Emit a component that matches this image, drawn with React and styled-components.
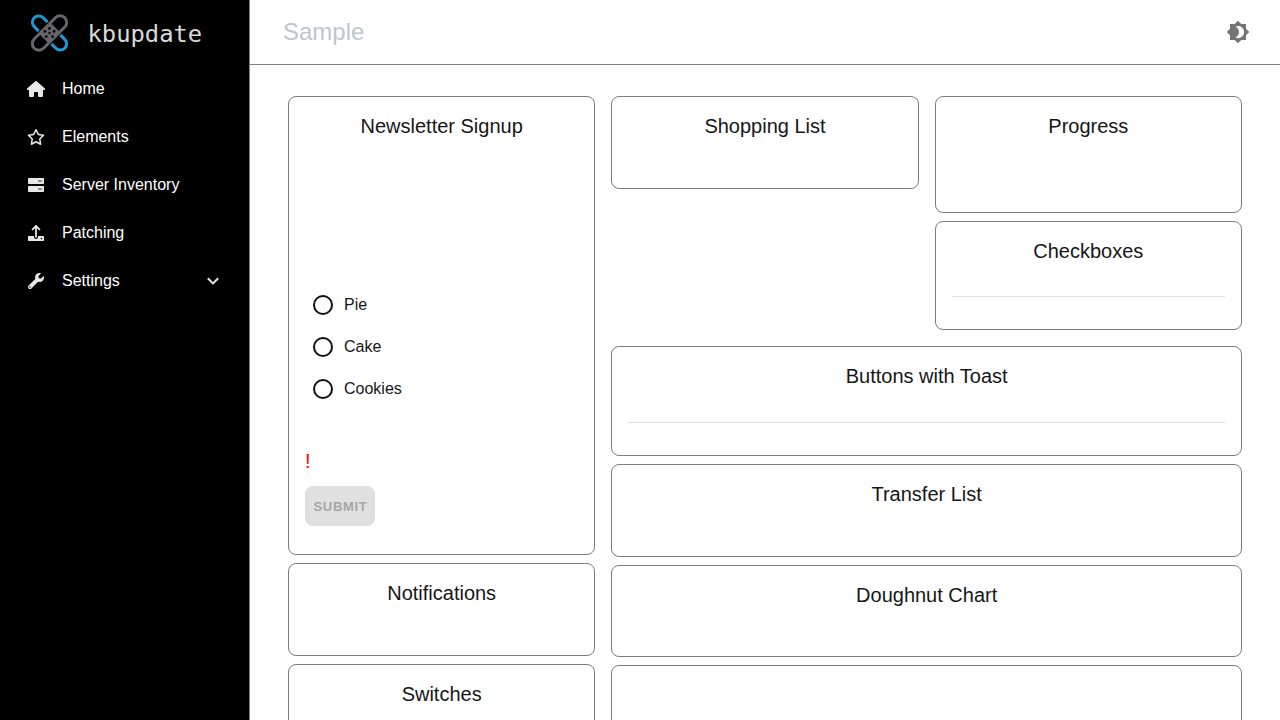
import React from "react";
import styled, { createGlobalStyle } from "styled-components";
import { FaHouse, FaRegStar } from "react-icons/fa6";
import { FaWrench } from "react-icons/fa";

const GlobalStyle = createGlobalStyle`
  *, *::before, *::after { box-sizing: border-box; }
  html, body { margin: 0; height: 100%; overflow: hidden; }
  body {
    font-family: "Liberation Sans", Arial, sans-serif;
    font-size: 16px;
    background: #fff;
    color: #161616;
  }
`;

const Shell = styled.div`
  display: flex;
  width: 100%;
  height: 100vh;
  overflow: hidden;
`;

const Sidebar = styled.nav`
  flex: 0 0 250px;
  background: #000;
  border-right: 1px solid #808080;
  color: #e7e7e7;
`;

const Brand = styled.div`
  display: flex;
  align-items: center;
  height: 64px;
  padding: 2px 0 0 30px;
`;

const BrandName = styled.span`
  margin-left: 18.5px;
  padding-top: 2px;
  font: 23.8px/28px "DejaVu Sans Mono", monospace;
  color: #d9d9d9;
`;

const NavItem = styled.a`
  display: flex;
  align-items: center;
  height: 48px;
  padding: 1px 30px 0 27px;
`;

const NavIcon = styled.span`
  display: flex;
  justify-content: center;
  width: 18px;
  margin-right: 17px;
`;

const NavLabel = styled.span`
  flex: 1;
  padding-top: 1px;
  color: #fff;
`;

const Main = styled.main`
  flex: 1;
  min-width: 0;
  display: flex;
  flex-direction: column;
`;

const Header = styled.header`
  flex: 0 0 65px;
  display: flex;
  align-items: center;
  justify-content: space-between;
  padding: 0 30px 0 33px;
  border-bottom: 1px solid #808080;
  color: #757575;
`;

const PageTitle = styled.h1`
  margin: 0;
  font-size: 24px;
  font-weight: 400;
  line-height: 32px;
  color: #bbc8ca;
`;

const Board = styled.div`
  display: grid;
  grid-template-columns: repeat(3, 1fr);
  column-gap: 16px;
  align-items: start;
  padding: 31px 38px 0;
`;

const Stack = styled.div`
  display: flex;
  flex-direction: column;
  gap: 8px;
`;

const WideArea = styled.div`
  grid-column: span 2;
  display: grid;
  grid-template-columns: 1fr 1fr;
  gap: 16px;
  align-items: start;
`;

const WideStack = styled(Stack)`
  grid-column: span 2;
`;

const Card = styled.section`
  height: ${(p) => p.$height}px;
  padding: 13px 16px;
  border: 1px solid #7c7c7c;
  border-radius: 8px;
`;

const CardTitle = styled.h2`
  margin: 0;
  font-size: 20px;
  font-weight: 400;
  line-height: 32px;
  text-align: center;
`;

const Divider = styled.hr`
  margin: ${(p) => p.$offset}px 0 0;
  border: 0;
  border-top: 1px solid #dfdfdf;
`;

const RadioGroup = styled.div`
  padding: 142px 0 0 8px;
`;

const RadioRow = styled.label`
  display: flex;
  align-items: center;
  height: 42px;
  gap: 11px;
`;

const RadioCircle = styled.span`
  width: 20px;
  height: 20px;
  border: 2px solid #111;
  border-radius: 50%;
`;

const RadioLabel = styled.span`
  line-height: 20px;
`;

const ErrorText = styled.p`
  margin: 39px 0 13px;
  font-size: 20px;
  line-height: 24px;
  color: #f00;
`;

const SubmitButton = styled.button`
  display: block;
  width: 70px;
  height: 40px;
  padding: 0 0 0 1px;
  border: 0;
  border-radius: 8px;
  background: #e0e0e0;
  color: #a6a6a6;
  font: 700 13px "Liberation Sans", Arial, sans-serif;
  letter-spacing: 0.7px;
`;

const Logo = () => (
  <svg width="39" height="38" viewBox="-19.5 -19 39 38" fill="none">
    <g transform="rotate(45)" stroke="#1b9ad6" strokeWidth="3">
      <path d="M-9 -6.3H-15.3A6.3 6.3 0 0 0 -15.3 6.3H-9" />
      <path d="M9 -6.3H15.3A6.3 6.3 0 0 1 15.3 6.3H9" />
    </g>
    <g transform="rotate(-45)">
      <rect x="-21.6" y="-6.6" width="43.2" height="13.2" rx="6.6" fill="#000" stroke="#66666b" strokeWidth="3" />
      <rect x="-8" y="-6.6" width="16" height="13.2" fill="#66666b" />
    </g>
    <g fill="#000">
      <circle cx="0" cy="-4.6" r="1.4" />
      <circle cx="-4.6" cy="-1.6" r="1.4" />
      <circle cx="4.6" cy="-1.6" r="1.4" />
      <circle cx="0" cy="0" r="1.2" />
      <circle cx="-3.2" cy="3.6" r="1.4" />
      <circle cx="3.2" cy="3.6" r="1.4" />
    </g>
  </svg>
);

const ThemeIcon = () => (
  <svg width="24" height="24" viewBox="0 0 24 24" fill="currentColor">
    <path d="M20 8.69V4h-4.69L12 .69 8.69 4H4v4.69L.69 12 4 15.31V20h4.69L12 23.31 15.31 20H20v-4.69L23.31 12 20 8.69zM12 18c-.89 0-1.74-.2-2.5-.55C11.56 16.5 13 14.42 13 12s-1.44-4.5-3.5-5.45C10.26 6.2 11.11 6 12 6c3.31 0 6 2.69 6 6s-2.69 6-6 6z" />
  </svg>
);

const ServerIcon = () => (
  <svg width="16" height="16" viewBox="0 0 16 16" fill="currentColor">
    <rect y="1" width="16" height="6" rx=".8" />
    <rect y="9" width="16" height="6" rx=".8" />
    <path fill="#8c8c8c" d="M10 3h4v2h-4zM10 11h4v2h-4z" />
  </svg>
);

const UploadIcon = () => (
  <svg width="16" height="16" viewBox="0 0 16 16">
    <path d="M.7 11H6v1a2 2 0 0 0 4 0v-1h5.3a.7.7 0 0 1 .7.7v3.6a.7.7 0 0 1-.7.7H.7a.7.7 0 0 1-.7-.7v-3.6a.7.7 0 0 1 .7-.7z" fill="currentColor" />
    <circle cx="13.5" cy="13.5" r=".8" fill="#000" />
    <path d="M8 11.8V1.2M4.6 4.3 8 .9l3.4 3.4" fill="none" stroke="currentColor" strokeWidth="1.8" strokeLinecap="round" strokeLinejoin="round" />
  </svg>
);

const ChevronIcon = () => (
  <svg width="12" height="8" viewBox="0 0 12 8" fill="none" stroke="currentColor" strokeWidth="2">
    <path d="M.8 1.2 6 6.4l5.2-5.2" />
  </svg>
);

const NAV = [
  { label: "Home", icon: <FaHouse size={18} /> },
  { label: "Elements", icon: <FaRegStar size={18} /> },
  { label: "Server Inventory", icon: <ServerIcon /> },
  { label: "Patching", icon: <UploadIcon /> },
  { label: "Settings", icon: <FaWrench size={16} />, expandable: true },
];

const FLAVORS = ["Pie", "Cake", "Cookies"];

const Panel = ({ title, height, children }) => (
  <Card $height={height}>
    <CardTitle>{title}</CardTitle>
    {children}
  </Card>
);

export default function App() {
  return (
    <>
      <GlobalStyle />
      <Shell>
        <Sidebar>
          <Brand>
            <Logo />
            <BrandName>kbupdate</BrandName>
          </Brand>
          {NAV.map(({ label, icon, expandable }) => (
            <NavItem key={label}>
              <NavIcon>{icon}</NavIcon>
              <NavLabel>{label}</NavLabel>
              {expandable && <ChevronIcon />}
            </NavItem>
          ))}
        </Sidebar>
        <Main>
          <Header>
            <PageTitle>Sample</PageTitle>
            <ThemeIcon />
          </Header>
          <Board>
            <Stack>
              <Panel title="Newsletter Signup" height={459}>
                <RadioGroup>
                  {FLAVORS.map((flavor) => (
                    <RadioRow key={flavor}>
                      <RadioCircle />
                      <RadioLabel>{flavor}</RadioLabel>
                    </RadioRow>
                  ))}
                </RadioGroup>
                <ErrorText>!</ErrorText>
                <SubmitButton disabled>SUBMIT</SubmitButton>
              </Panel>
              <Panel title="Notifications" height={93} />
              <Panel title="Switches" height={93} />
            </Stack>
            <WideArea>
              <Panel title="Shopping List" height={93} />
              <Stack>
                <Panel title="Progress" height={117} />
                <Panel title="Checkboxes" height={109}>
                  <Divider $offset={29} />
                </Panel>
              </Stack>
              <WideStack>
                <Panel title="Buttons with Toast" height={110}>
                  <Divider $offset={30} />
                </Panel>
                <Panel title="Transfer List" height={93} />
                <Panel title="Doughnut Chart" height={92} />
                <Card $height={93} />
              </WideStack>
            </WideArea>
          </Board>
        </Main>
      </Shell>
    </>
  );
}
